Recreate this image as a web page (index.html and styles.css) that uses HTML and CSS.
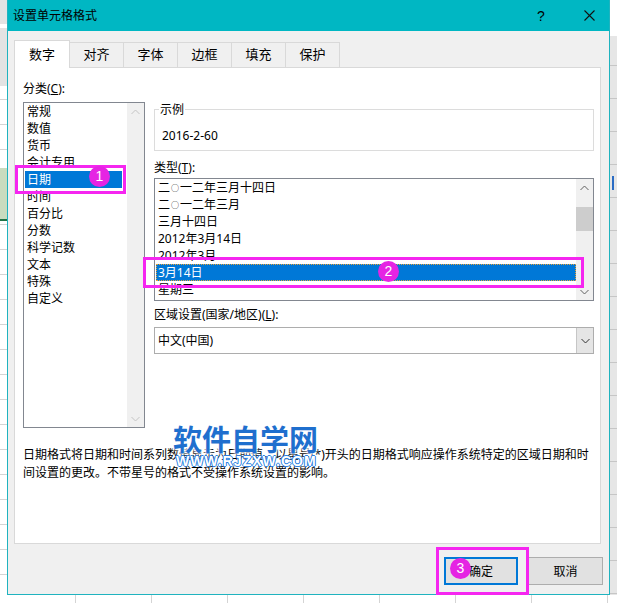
FILE: index.html
```html
<!DOCTYPE html>
<html lang="zh-CN">
<head>
  <meta charset="UTF-8" />
  <title>设置单元格格式</title>
  <link rel="stylesheet" href="styles.css">
</head>
<body>
  <div class="screen">
    <div class="sheet-left"></div>

    <div class="dialog">
      <div class="titlebar">
        <span class="title">设置单元格格式</span>
        <span class="help">?</span>
        <span class="close">
          <svg width="11" height="11" viewBox="0 0 11 11"><path d="M0.5 0.5 L10.5 10.5 M10.5 0.5 L0.5 10.5" stroke="#111" stroke-width="1.1" fill="none"/></svg>
        </span>
      </div>

      <div class="dialog-body">
        <div class="tabs">
          <div class="tab active">数字</div>
          <div class="tab">对齐</div>
          <div class="tab">字体</div>
          <div class="tab">边框</div>
          <div class="tab">填充</div>
          <div class="tab">保护</div>
        </div>

        <div class="panel">
          <div class="panel-top">
            <div class="category">
              <div class="label">分类(<u>C</u>):</div>
              <div class="listbox cat-list">
                <ul class="items">
                  <li>常规</li>
                  <li>数值</li>
                  <li>货币</li>
                  <li>会计专用</li>
                  <li class="selected">日期</li>
                  <li>时间</li>
                  <li>百分比</li>
                  <li>分数</li>
                  <li>科学记数</li>
                  <li>文本</li>
                  <li>特殊</li>
                  <li>自定义</li>
                </ul>
                <div class="vscroll off">
                  <div class="arrow"><svg width="9" height="6" viewBox="0 0 9 6"><path d="M0.5 5 L4.5 1 L8.5 5" stroke="currentColor" fill="none"/></svg></div>
                  <div class="track"></div>
                  <div class="arrow"><svg width="9" height="6" viewBox="0 0 9 6"><path d="M0.5 1 L4.5 5 L8.5 1" stroke="currentColor" fill="none"/></svg></div>
                </div>
              </div>
            </div>

            <div class="details">
              <fieldset class="sample">
                <legend>示例</legend>
                <div class="sample-value">2016-2-60</div>
              </fieldset>

              <div class="label type-label">类型(<u>T</u>):</div>
              <div class="listbox type-list">
                <ul class="items">
                  <li>二<span class="ring">○</span>一二年三月十四日</li>
                  <li>二<span class="ring">○</span>一二年三月</li>
                  <li>三月十四日</li>
                  <li>2012年3月14日</li>
                  <li>2012年3月</li>
                  <li class="selected">3月14日</li>
                  <li>星期三</li>
                </ul>
                <div class="vscroll">
                  <div class="arrow"><svg width="9" height="6" viewBox="0 0 9 6"><path d="M0.5 5 L4.5 1 L8.5 5" stroke="currentColor" fill="none"/></svg></div>
                  <div class="track"><div class="thumb"></div></div>
                  <div class="arrow"><svg width="9" height="6" viewBox="0 0 9 6"><path d="M0.5 1 L4.5 5 L8.5 1" stroke="currentColor" fill="none"/></svg></div>
                </div>
              </div>

              <div class="label region-label">区域设置(国家/地区)(<u>L</u>):</div>
              <div class="combo">
                <div class="combo-text">中文(中国)</div>
                <div class="combo-btn"><svg width="9" height="6" viewBox="0 0 9 6"><path d="M0.5 1 L4.5 5 L8.5 1" stroke="#333" fill="none"/></svg></div>
              </div>
            </div>
          </div>

          <p class="desc">日期格式将日期和时间系列数值显示为日期值。以星号(*)开头的日期格式响应操作系统特定的区域日期和时间设置的更改。不带星号的格式不受操作系统设置的影响。</p>
        </div>

        <div class="buttons">
          <button class="btn default">确定</button>
          <button class="btn">取消</button>
        </div>
      </div>
    </div>

    <div class="sheet-right"></div>

    <!-- annotations drawn over the screenshot -->
    <div class="mark-box mark-box-1"></div>
    <div class="mark-dot mark-dot-1">1</div>
    <div class="mark-box mark-box-2"></div>
    <div class="mark-dot mark-dot-2">2</div>
    <div class="mark-box mark-box-3"></div>
    <div class="mark-dot mark-dot-3">3</div>

    <div class="watermark">
      <div class="wm-name">软件自学网</div>
      <div class="wm-url">WWW.RJZXW.COM</div>
    </div>
  </div>
  <div class="sheet-bottom"></div>
</body>
</html>
```

FILE: styles.css
```css
* {
  margin: 0;
  padding: 0;
  box-sizing: border-box;
}

body {
  width: 617px;
  height: 603px;
  overflow: hidden;
  background: #fff;
  color: #000;
  font-family: "Noto Sans", "Noto Sans CJK SC", sans-serif;
  font-size: 12px;
}

.screen {
  position: relative;
  display: flex;
  height: 595px;
}

/* excel sheet peeking out behind the dialog */
.sheet-left {
  width: 7px;
  background:
    linear-gradient(#e3e3e3 0 24px, #fff 24px 28px, #e3e3e3 28px 86px, transparent 86px),
    linear-gradient(transparent 0 168px, #c9dcbf 168px 219px, #217346 219px 221px, transparent 221px),
    repeating-linear-gradient(#fff 0 24px, #d4d4d4 24px 25px);
}

.sheet-right {
  flex: 1;
  background:
    linear-gradient(to right, transparent 0 2px, #2b6cc4 2px 4px, transparent 4px) 0 176px / 100% 14px no-repeat,
    linear-gradient(#fff 0 36px, transparent 36px),
    repeating-linear-gradient(#e6e6e6 0 32px, #c6c6c6 32px 33px);
}

.sheet-bottom {
  height: 8px;
  background: repeating-linear-gradient(to right, #fff 0 75px, #d4d4d4 75px 76px);
}

.dialog {
  width: 603px;
  display: flex;
  flex-direction: column;
  background: #f0f0f0;
  border: 1px solid #1fb3bf;
  border-top: 0;
}

.titlebar {
  height: 31px;
  display: flex;
  align-items: center;
  padding-left: 5px;
  background: #00b7c3;
}

.title {
  flex: 1;
  font-size: 12px;
  line-height: 17px;
}

.help {
  width: 30px;
  margin-right: 13px;
  text-align: center;
  font-family: "Liberation Sans", sans-serif;
  font-size: 14px;
}

.close {
  width: 40px;
  display: flex;
  justify-content: center;
}

.dialog-body {
  flex: 1;
  display: flex;
  flex-direction: column;
  padding: 9px 6px 9px 6px;
}

.tabs {
  position: relative;
  z-index: 1;
  display: flex;
  height: 27px;
}

.tab {
  width: 55px;
  height: 25px;
  margin-top: 2px;
  margin-left: -1px;
  border: 1px solid #d9d9d9;
  border-bottom: 0;
  background: #f0f0f0;
  text-align: center;
  font-size: 13px;
  line-height: 23px;
}

.tab:first-child {
  margin-left: 0;
}

.tab.active {
  width: 56px;
  height: 28px;
  margin-top: 0;
  background: #fff;
  line-height: 27px;
}

.panel {
  height: 477px;
  margin-right: 2px;
  padding: 12px 6px 0 8px;
  background: #fff;
  border: 1px solid #d9d9d9;
}

.panel-top {
  display: flex;
  gap: 9px;
}

.label {
  height: 17px;
  line-height: 17px;
}

.category {
  width: 122px;
}

.details {
  width: 440px;
}

.listbox {
  display: flex;
  background: #fff;
  border: 1px solid #828790;
}

.cat-list {
  height: 326px;
  margin-top: 5px;
}

.items {
  flex: 1;
  list-style: none;
  overflow: hidden;
}

.items li {
  height: 17px;
  line-height: 17px;
  padding-left: 3px;
  white-space: nowrap;
}

.items li.selected {
  margin-left: 1px;
  padding-left: 2px;
  background: #0078d7;
  color: #fff;
}

.ring {
  font-size: 8px;
  vertical-align: 1px;
  margin: 0 1px;
}

.cat-list .items li.selected {
  margin-right: 5px;
}

.type-list .items li.selected {
  outline: 1px dotted #e8a33a;
  outline-offset: -1px;
}

.vscroll {
  width: 17px;
  display: flex;
  flex-direction: column;
  background: #f0f0f0;
  color: #606060;
}

.vscroll.off {
  color: #c4c4c4;
}

.arrow {
  height: 17px;
  display: flex;
  align-items: center;
  justify-content: center;
}

.track {
  flex: 1;
}

.thumb {
  height: 24px;
  margin-top: 11px;
  background: #cdcdcd;
}

.sample {
  margin-top: 21px;
  padding: 0 4px 6px;
  border: 1px solid #dcdcdc;
}

.sample legend {
  padding: 0 1px;
  line-height: 17px;
}

.sample-value {
  height: 17px;
  margin-top: 9px;
  padding-left: 3px;
  line-height: 17px;
}

.type-label {
  margin-top: 8px;
}

.type-list {
  height: 123px;
  margin-top: 2px;
}

.region-label {
  margin-top: 5px;
}

.combo {
  display: flex;
  height: 27px;
  margin-top: 4px;
  border: 1px solid #adadad;
}

.combo-text {
  flex: 1;
  padding-left: 3px;
  line-height: 25px;
}

.combo-btn {
  width: 17px;
  display: flex;
  align-items: center;
  justify-content: center;
  background: #e5e5e5;
  border-left: 1px solid #c6c6c6;
}

.desc {
  margin-top: 18px;
  line-height: 18px;
}

.buttons {
  display: flex;
  justify-content: flex-end;
  gap: 10px;
  margin-top: 13px;
}

.btn {
  width: 75px;
  height: 28px;
  background: #e1e1e1;
  border: 1px solid #adadad;
  font-family: inherit;
  font-size: 12px;
  color: #000;
}

.btn.default {
  width: 74px;
  border: 2px solid #0078d7;
}

/* magenta step markers */
.mark-box {
  position: absolute;
  border: 3px solid #f526f0;
}

.mark-box-1 { left: 15px; top: 165px; width: 111px; height: 29px; }
.mark-box-2 { left: 143px; top: 257px; width: 441px; height: 31px; }
.mark-box-3 { left: 436px; top: 547px; width: 93px; height: 48px; }

.mark-dot {
  position: absolute;
  width: 21px;
  height: 21px;
  border-radius: 50%;
  background: #e524e3;
  color: #fff;
  text-align: center;
  font-family: "Liberation Sans", sans-serif;
  font-size: 14px;
  line-height: 21px;
}

.mark-dot-1 { left: 89px; top: 166px; }
.mark-dot-2 { left: 378px; top: 261px; }
.mark-dot-3 { left: 450px; top: 558px; }

.watermark {
  position: absolute;
  left: 173px;
  top: 421px;
}

.wm-name {
  font-family: "Noto Sans CJK SC", sans-serif;
  font-size: 29px;
  font-weight: 700;
  line-height: 34px;
  color: #1f6fce;
  text-shadow: 0 0 2px #fff, 0 0 3px #fff, 0 0 4px #fff;
}

.wm-url {
  margin-left: 3px;
  font-family: "Liberation Sans", sans-serif;
  font-size: 14px;
  font-weight: 700;
  letter-spacing: 1px;
  line-height: 13px;
  color: #fff;
  text-shadow: 1px 0 #2a7fe0, -1px 0 #2a7fe0, 0 1px #2a7fe0, 0 -1px #2a7fe0;
}
```
